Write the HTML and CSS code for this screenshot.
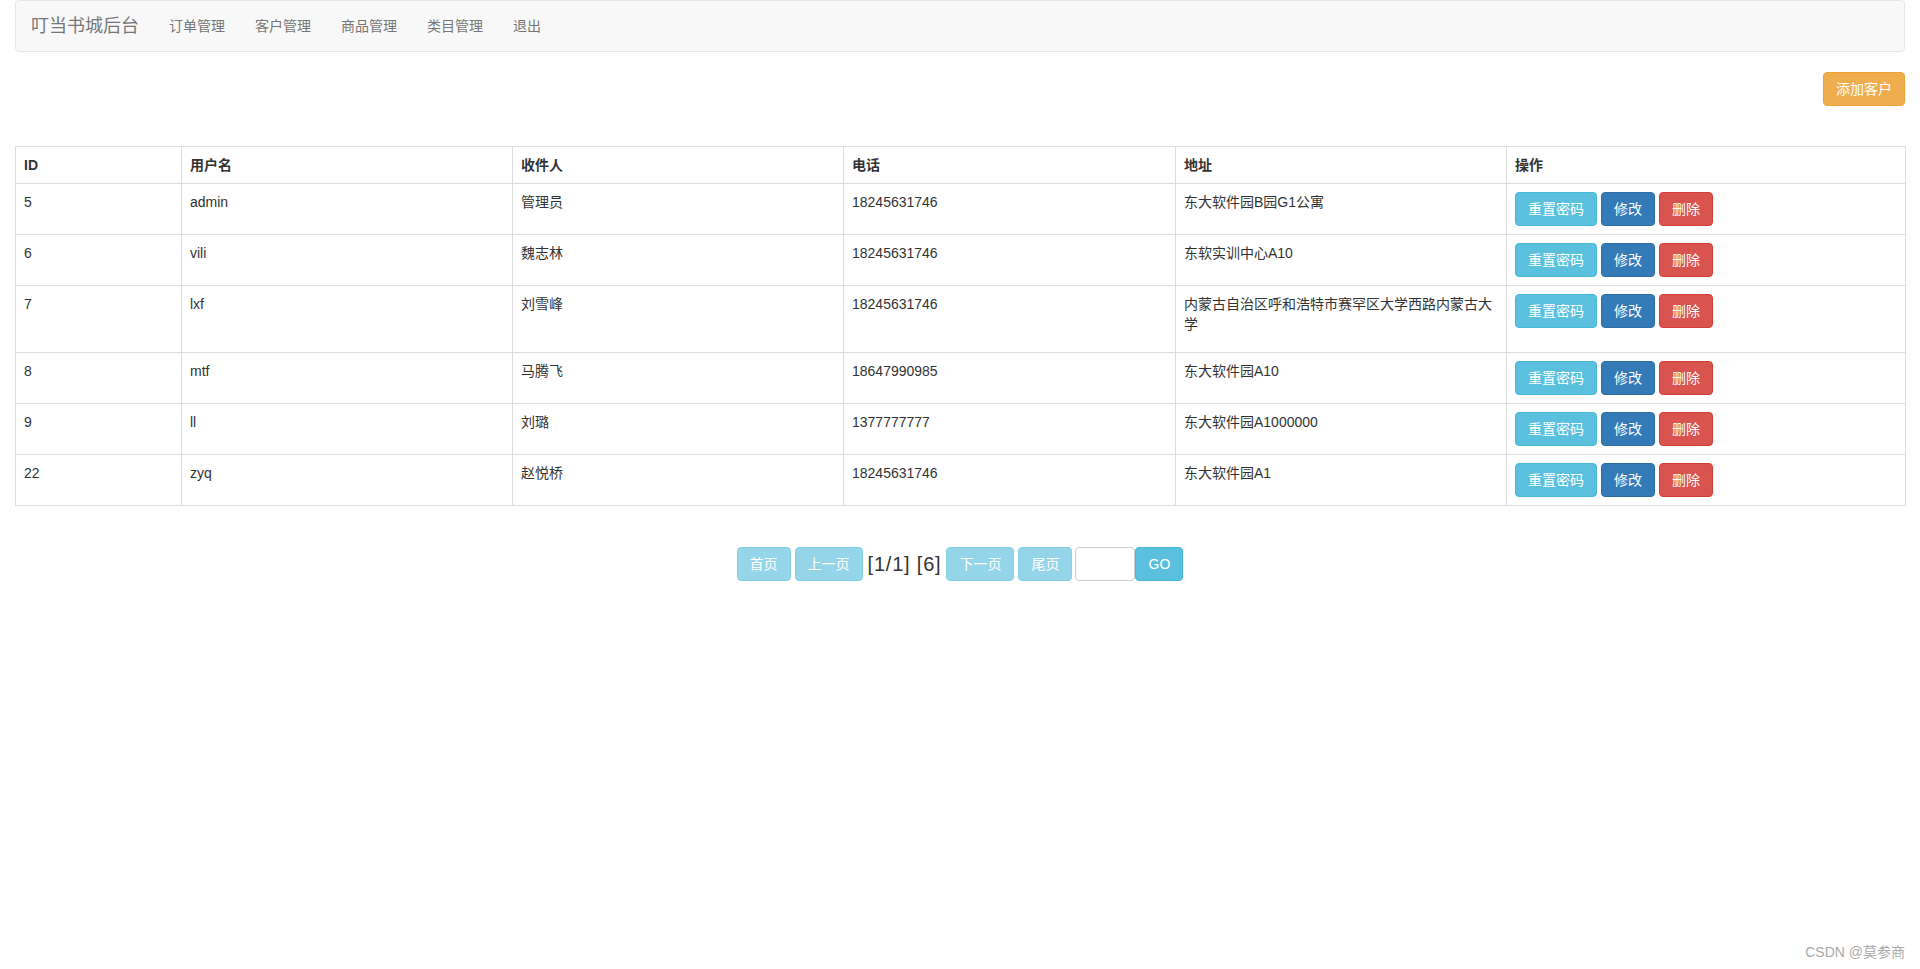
FILE: index.html
```html
<!DOCTYPE html>
<html lang="zh-CN">
<head>
<meta charset="utf-8">
<title>叮当书城后台</title>
<link rel="stylesheet" href="styles.css">
</head>
<body>
<div class="page">
  <nav class="navbar">
    <a class="brand" href="#">叮当书城后台</a>
    <ul class="nav">
      <li><a href="#">订单管理</a></li>
      <li><a href="#">客户管理</a></li>
      <li><a href="#">商品管理</a></li>
      <li><a href="#">类目管理</a></li>
      <li><a href="#">退出</a></li>
    </ul>
  </nav>

  <div class="toolbar">
    <a class="btn btn-warning" href="#">添加客户</a>
  </div>

  <table class="table">
    <colgroup>
      <col class="c-id">
      <col class="c-user">
      <col class="c-name">
      <col class="c-phone">
      <col class="c-addr">
      <col class="c-ops">
    </colgroup>
    <thead>
      <tr><th>ID</th><th>用户名</th><th>收件人</th><th>电话</th><th>地址</th><th>操作</th></tr>
    </thead>
    <tbody>
      <tr>
        <td>5</td><td>admin</td><td>管理员</td><td>18245631746</td><td>东大软件园B园G1公寓</td>
        <td><div class="actions"><a class="btn btn-info" href="#">重置密码</a><a class="btn btn-primary" href="#">修改</a><a class="btn btn-danger" href="#">删除</a></div></td>
      </tr>
      <tr>
        <td>6</td><td>vili</td><td>魏志林</td><td>18245631746</td><td>东软实训中心A10</td>
        <td><div class="actions"><a class="btn btn-info" href="#">重置密码</a><a class="btn btn-primary" href="#">修改</a><a class="btn btn-danger" href="#">删除</a></div></td>
      </tr>
      <tr class="tall">
        <td>7</td><td>lxf</td><td>刘雪峰</td><td>18245631746</td><td>内蒙古自治区呼和浩特市赛罕区大学西路内蒙古大学</td>
        <td><div class="actions"><a class="btn btn-info" href="#">重置密码</a><a class="btn btn-primary" href="#">修改</a><a class="btn btn-danger" href="#">删除</a></div></td>
      </tr>
      <tr>
        <td>8</td><td>mtf</td><td>马腾飞</td><td>18647990985</td><td>东大软件园A10</td>
        <td><div class="actions"><a class="btn btn-info" href="#">重置密码</a><a class="btn btn-primary" href="#">修改</a><a class="btn btn-danger" href="#">删除</a></div></td>
      </tr>
      <tr>
        <td>9</td><td>ll</td><td>刘璐</td><td>1377777777</td><td>东大软件园A1000000</td>
        <td><div class="actions"><a class="btn btn-info" href="#">重置密码</a><a class="btn btn-primary" href="#">修改</a><a class="btn btn-danger" href="#">删除</a></div></td>
      </tr>
      <tr>
        <td>22</td><td>zyq</td><td>赵悦桥</td><td>18245631746</td><td>东大软件园A1</td>
        <td><div class="actions"><a class="btn btn-info" href="#">重置密码</a><a class="btn btn-primary" href="#">修改</a><a class="btn btn-danger" href="#">删除</a></div></td>
      </tr>
    </tbody>
  </table>

  <div class="pager">
    <a class="btn btn-info disabled" href="#">首页</a>
    <a class="btn btn-info disabled" href="#">上一页</a>
    <span class="page-info">[1/1] [6]</span>
    <a class="btn btn-info disabled" href="#">下一页</a>
    <a class="btn btn-info disabled pre-input" href="#">尾页</a>
    <span class="goto"><input class="page-input" type="text"><a class="btn btn-info" href="#">GO</a></span>
  </div>
</div>
<div class="watermark">CSDN @莫参商</div>
</body>
</html>
```

FILE: styles.css
```css
* {
  box-sizing: border-box;
}

html, body {
  margin: 0;
  padding: 0;
}

body {
  font-family: "Liberation Sans", Arial, "Noto Sans CJK SC", sans-serif;
  font-size: 14px;
  line-height: 20px;
  color: #333;
  background: #fff;
  min-height: 969px;
  position: relative;
}

a {
  text-decoration: none;
}

.page {
  padding: 0 15px;
}

/* Navbar */
.navbar {
  display: flex;
  align-items: stretch;
  height: 52px;
  margin-bottom: 20px;
  background: #f8f8f8;
  border: 1px solid #e7e7e7;
  border-radius: 4px;
}

.brand {
  display: block;
  padding: 15px;
  font-size: 18px;
  line-height: 20px;
  color: #777;
}

.nav {
  display: flex;
  margin: 0;
  padding: 0;
  list-style: none;
}

.nav a {
  display: block;
  padding: 15px;
  line-height: 20px;
  color: #777;
}

/* Buttons */
.btn {
  display: inline-block;
  padding: 6px 12px;
  font-size: 14px;
  line-height: 20px;
  height: 34px;
  border: 1px solid transparent;
  border-radius: 4px;
  color: #fff;
  text-align: center;
  white-space: nowrap;
}

.btn-warning {
  background: #f0ad4e;
  border-color: #eea236;
}

.btn-info {
  background: #5bc0de;
  border-color: #46b8da;
}

.btn-primary {
  background: #337ab7;
  border-color: #2e6da4;
}

.btn-danger {
  background: #d9534f;
  border-color: #d43f3a;
}

.btn.disabled {
  opacity: 0.65;
}

.toolbar {
  display: flex;
  justify-content: flex-end;
  margin-bottom: 40px;
}

/* Table */
.table {
  width: 100%;
  table-layout: fixed;
  border-collapse: collapse;
  border: 1px solid #ddd;
}

.c-id { width: 166px; }
.c-user { width: 331px; }
.c-name { width: 331px; }
.c-phone { width: 332px; }
.c-addr { width: 331px; }
.c-ops { width: 399px; }

.table th,
.table td {
  padding: 8px;
  line-height: 20px;
  text-align: left;
  vertical-align: top;
  border: 1px solid #ddd;
  box-sizing: content-box;
}

.table th {
  font-weight: bold;
  height: 20px;
}

.table td {
  height: 34px;
}

.table tr.tall td {
  height: 50px;
}

.actions {
  display: flex;
  gap: 4px;
}

/* Pager */
.pager {
  display: flex;
  justify-content: center;
  align-items: center;
  margin-top: 41px;
  gap: 4px;
}

.page-info {
  font-size: 20px;
  letter-spacing: 0.8px;
  color: #333;
  padding: 0 1px;
}

.pre-input {
  margin-right: -1px;
}

.goto {
  display: flex;
}

.page-input {
  width: 60px;
  height: 34px;
  margin: 0;
  border: 1px solid #ccc;
  border-radius: 4px;
  padding: 6px 8px;
  font-size: 14px;
  font-family: inherit;
}

.goto .btn {
  width: 48px;
}

/* CSDN watermark overlay */
.watermark {
  position: absolute;
  right: 15px;
  bottom: 8px;
  font-size: 14px;
  color: #aaa;
  line-height: 18px;
}
```
